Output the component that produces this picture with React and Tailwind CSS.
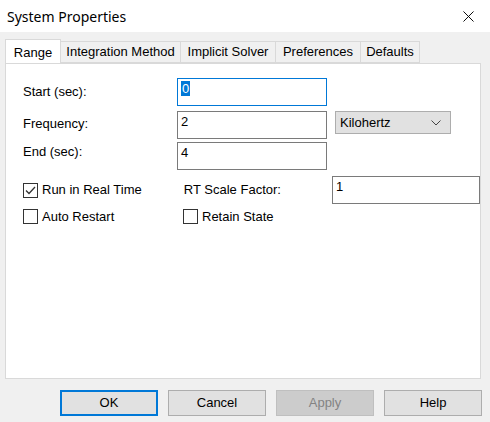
import { X } from "lucide-react";

const TABS = ["Integration Method", "Implicit Solver", "Preferences", "Defaults"];
const TAB_W = [120, 95, 85, 59];

function Check({ checked }) {
  return (
    <span className="flex h-[15px] w-[15px] shrink-0 items-center justify-center border border-[#333333] bg-white">
      {checked && (
        <svg width="11" height="9" viewBox="0 0 11 9" fill="none">
          <path d="M1 4.5 L4 7.5 L10 1" stroke="#333333" strokeWidth="1.3" />
        </svg>
      )}
    </span>
  );
}

function Field({ value, focused, className = "" }) {
  return (
    <div
      className={`h-[28px] w-[150px] bg-white pl-[3px] pt-[2px] text-[13px] leading-[16px] text-black ${
        focused ? "border border-[#0078d7]" : "border border-[#7a7a7a]"
      } ${className}`}
    >
      {focused ? <span className="bg-[#0078d7] px-[1px] text-white">{value}</span> : value}
    </div>
  );
}

function Btn({ children, primary, disabled }) {
  let cls = "border border-[#adadad] bg-[#e1e1e1] text-black";
  if (primary) cls = "border-2 border-[#0078d7] bg-[#e1e1e1] text-black";
  if (disabled) cls = "border border-[#bfbfbf] bg-[#cccccc] text-[#838383]";
  return (
    <div className={`flex h-[26px] w-[98px] items-center justify-center text-[13px] ${cls}`}>{children}</div>
  );
}

export default function App() {
  return (
    <div
      className="flex h-[422px] w-[490px] flex-col overflow-hidden bg-[#f0f0f0]"
      style={{ fontFamily: '"Liberation Sans", Arial, sans-serif' }}
    >
      {/* title bar */}
      <div className="flex h-[32px] shrink-0 items-center justify-between bg-white pl-[7px] pr-[12px]">
        <span className="text-[14px] text-black" style={{ fontFamily: '"Noto Sans", "Open Sans", sans-serif' }}>
          System Properties
        </span>
        <X size={19} strokeWidth={1.2} className="text-black" />
      </div>

      {/* tabs */}
      <div className="relative mt-[8px] flex h-[23px] shrink-0 items-end pl-[5px]">
        <div className="relative z-10 flex h-[24px] w-[56px] items-start justify-center border border-b-0 border-[#d9d9d9] bg-white pt-[3px] text-[13px] text-black">
          Range
        </div>
        {TABS.map((t, i) => (
          <div
            key={t}
            className="flex h-[22px] items-center justify-center border border-l-0 border-[#d9d9d9] bg-[#f0f0f0] text-[13px] text-black"
            style={{ width: TAB_W[i] }}
          >
            {t}
          </div>
        ))}
      </div>

      {/* panel */}
      <div className="mx-[5px] h-[316px] w-[476px] shrink-0 border border-[#d9d9d9] bg-white pl-[17px] pt-[14px]">
        <div className="flex items-center">
          <span className="w-[154px] text-[13px] text-black">Start (sec):</span>
          <Field value="0" focused />
        </div>
        <div className="mt-[5px] flex items-start">
          <span className="mt-[3px] w-[154px] text-[13px] text-black">Frequency:</span>
          <Field value="2" className="h-[27px]" />
          <div className="ml-[8px] flex h-[23px] w-[116px] items-center justify-between border border-[#adadad] bg-[#e1e1e1] pl-[4px] pr-[9px] text-[13px] text-black">
            Kilohertz
            <svg width="10" height="6" viewBox="0 0 10 6" fill="none">
              <path d="M0.5 0.5 L5 5 L9.5 0.5" stroke="#444444" strokeWidth="1" />
            </svg>
          </div>
        </div>
        <div className="mt-[3px] flex items-start">
          <span className="w-[154px] text-[13px] text-black">End (sec):</span>
          <Field value="4" />
        </div>

        <div className="mt-[6px] flex items-center">
          <label className="flex w-[163px] items-center gap-[4px] text-[13px] text-black">
            <Check checked />
            Run in Real Time
          </label>
          <span className="w-[150px] text-[13px] text-black">RT Scale Factor:</span>
          <Field value="1" className="h-[27px] w-[116px]" />
        </div>
        <div className="mt-[3px] flex items-center">
          <label className="flex w-[160px] items-center gap-[4px] text-[13px] text-black">
            <Check />
            Auto Restart
          </label>
          <label className="flex items-center gap-[4px] text-[13px] text-black">
            <Check />
            Retain State
          </label>
        </div>
      </div>

      {/* buttons */}
      <div className="mt-[11px] flex justify-end gap-[10px] pr-[8px]">
        <Btn primary>OK</Btn>
        <Btn>Cancel</Btn>
        <Btn disabled>Apply</Btn>
        <Btn>Help</Btn>
      </div>
    </div>
  );
}
